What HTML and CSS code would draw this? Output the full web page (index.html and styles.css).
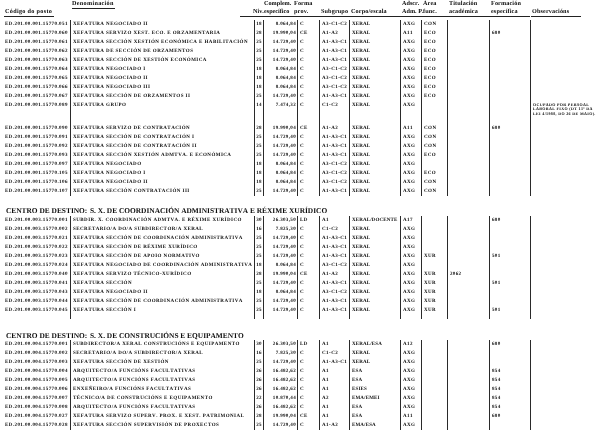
FILE: index.html
```html
<!DOCTYPE html>
<html lang="gl">
<head>
<meta charset="utf-8">
<title>RPT</title>
<link rel="stylesheet" href="styles.css">
</head>
<body>
<div class="page">
  <div class="head">
    <div class="hc c1"><span class="lab ul">Código do posto</span></div>
    <div class="hc c2"><span class="lab ul">Denominación</span><span class="fill"></span><span class="tail"></span></div>
    <div class="hc line niv"><span class="lab">Niv.</span></div>
    <div class="hc line esp"><span class="lab">Complem.<br>específico</span></div>
    <div class="hc line forma"><span class="lab">Forma<br>prov.</span></div>
    <div class="hc line"><span class="lab">Subgrupo</span></div>
    <div class="hc line"><span class="lab">Corpo/escala</span></div>
    <div class="hc line tight"><span class="lab">Adscr.<br>Adm. P.</span></div>
    <div class="hc line"><span class="lab">Área<br>func.</span></div>
    <div class="hc line"><span class="lab">Titulación<br>académica</span></div>
    <div class="hc line"><span class="lab">Formación<br>específica</span></div>
    <div class="hc obsh"><span class="lab ul">Observacións</span></div>
  </div>

  <table class="rpt">
    <colgroup>
      <col class="w1"><col class="w2"><col class="w3"><col class="w4"><col class="w5"><col class="w6">
      <col class="w7"><col class="w8"><col class="w9"><col class="w10"><col class="w11"><col class="w12">
    </colgroup>
    <tbody>
      <tr><td>ED.201.00.001.15770.051</td><td>XEFATURA NEGOCIADO II</td><td class="n">18</td><td class="r">8.064,84</td><td>C</td><td>A3-C1-C2</td><td>XERAL</td><td>AXG</td><td>CON</td><td></td><td></td><td></td></tr>
      <tr><td>ED.201.00.001.15770.060</td><td>XEFATURA SERVIZO XEST. ECO. E ORZAMENTARIA</td><td class="n">28</td><td class="r">19.990,04</td><td>CE</td><td>A1-A2</td><td>XERAL</td><td>A11</td><td>ECO</td><td></td><td>680</td><td></td></tr>
      <tr><td>ED.201.00.001.15770.061</td><td>XEFATURA SECCIÓN XESTIÓN ECONÓMICA E HABILITACIÓN</td><td class="n">25</td><td class="r">14.729,40</td><td>C</td><td>A1-A3-C1</td><td>XERAL</td><td>AXG</td><td>ECO</td><td></td><td></td><td></td></tr>
      <tr><td>ED.201.00.001.15770.062</td><td>XEFATURA DE SECCIÓN DE ORZAMENTOS</td><td class="n">25</td><td class="r">14.729,40</td><td>C</td><td>A1-A3-C1</td><td>XERAL</td><td>AXG</td><td>ECO</td><td></td><td></td><td></td></tr>
      <tr><td>ED.201.00.001.15770.063</td><td>XEFATURA SECCIÓN DE XESTIÓN ECONÓMICA</td><td class="n">25</td><td class="r">14.729,40</td><td>C</td><td>A1-A3-C1</td><td>XERAL</td><td>AXG</td><td>ECO</td><td></td><td></td><td></td></tr>
      <tr><td>ED.201.00.001.15770.064</td><td>XEFATURA NEGOCIADO I</td><td class="n">18</td><td class="r">8.064,84</td><td>C</td><td>A3-C1-C2</td><td>XERAL</td><td>AXG</td><td>ECO</td><td></td><td></td><td></td></tr>
      <tr><td>ED.201.00.001.15770.065</td><td>XEFATURA NEGOCIADO II</td><td class="n">18</td><td class="r">8.064,84</td><td>C</td><td>A3-C1-C2</td><td>XERAL</td><td>AXG</td><td>ECO</td><td></td><td></td><td></td></tr>
      <tr><td>ED.201.00.001.15770.066</td><td>XEFATURA NEGOCIADO III</td><td class="n">18</td><td class="r">8.064,84</td><td>C</td><td>A3-C1-C2</td><td>XERAL</td><td>AXG</td><td>ECO</td><td></td><td></td><td></td></tr>
      <tr><td>ED.201.00.001.15770.067</td><td>XEFATURA SECCIÓN DE ORZAMENTOS II</td><td class="n">25</td><td class="r">14.729,40</td><td>C</td><td>A1-A3-C1</td><td>XERAL</td><td>AXG</td><td>ECO</td><td></td><td></td><td></td></tr>
      <tr class="tall"><td>ED.201.00.001.15770.089</td><td>XEFATURA GRUPO</td><td class="n">14</td><td class="r">7.474,32</td><td>C</td><td>C1-C2</td><td>XERAL</td><td>AXG</td><td></td><td></td><td></td><td class="obs">OCUPADO POR PERSOAL<br>LABORAL FIXO (DT 11ª DA<br>LEI 4/1988, DO 26 DE MAIO).</td></tr>
      <tr><td>ED.201.00.001.15770.090</td><td>XEFATURA SERVIZO DE CONTRATACIÓN</td><td class="n">28</td><td class="r">19.990,04</td><td>CE</td><td>A1-A2</td><td>XERAL</td><td>A11</td><td>CON</td><td></td><td>680</td><td></td></tr>
      <tr><td>ED.201.00.001.15770.091</td><td>XEFATURA SECCIÓN DE CONTRATACIÓN I</td><td class="n">25</td><td class="r">14.729,40</td><td>C</td><td>A1-A3-C1</td><td>XERAL</td><td>AXG</td><td>CON</td><td></td><td></td><td></td></tr>
      <tr><td>ED.201.00.001.15770.092</td><td>XEFATURA SECCIÓN DE CONTRATACIÓN II</td><td class="n">25</td><td class="r">14.729,40</td><td>C</td><td>A1-A3-C1</td><td>XERAL</td><td>AXG</td><td>CON</td><td></td><td></td><td></td></tr>
      <tr><td>ED.201.00.001.15770.093</td><td>XEFATURA SECCIÓN XESTIÓN ADMTVA. E ECONÓMICA</td><td class="n">25</td><td class="r">14.729,40</td><td>C</td><td>A1-A3-C1</td><td>XERAL</td><td>AXG</td><td>ECO</td><td></td><td></td><td></td></tr>
      <tr><td>ED.201.00.001.15770.097</td><td>XEFATURA NEGOCIADO</td><td class="n">18</td><td class="r">8.064,84</td><td>C</td><td>A3-C1-C2</td><td>XERAL</td><td>AXG</td><td></td><td></td><td></td><td></td></tr>
      <tr><td>ED.201.00.001.15770.105</td><td>XEFATURA NEGOCIADO I</td><td class="n">18</td><td class="r">8.064,84</td><td>C</td><td>A3-C1-C2</td><td>XERAL</td><td>AXG</td><td>ECO</td><td></td><td></td><td></td></tr>
      <tr><td>ED.201.00.001.15770.106</td><td>XEFATURA NEGOCIADO II</td><td class="n">18</td><td class="r">8.064,84</td><td>C</td><td>A3-C1-C2</td><td>XERAL</td><td>AXG</td><td>CON</td><td></td><td></td><td></td></tr>
      <tr><td>ED.201.00.001.15770.107</td><td>XEFATURA SECCIÓN CONTRATACIÓN III</td><td class="n">25</td><td class="r">14.729,40</td><td>C</td><td>A1-A3-C1</td><td>XERAL</td><td>AXG</td><td>CON</td><td></td><td></td><td></td></tr>

      <tr class="hd hd1"><td colspan="12"><span class="cd">CENTRO DE DESTINO:</span>S. X. DE COORDINACIÓN ADMINISTRATIVA E RÉXIME XURÍDICO</td></tr>

      <tr><td>ED.201.00.003.15770.001</td><td>SUBDIR. X. COORDINACIÓN ADMTVA. E RÉXIME XURÍDICO</td><td class="n">30</td><td class="r">26.303,50</td><td>LD</td><td>A1</td><td>XERAL/DOCENTE</td><td>A17</td><td></td><td></td><td>680</td><td></td></tr>
      <tr><td>ED.201.00.003.15770.002</td><td>SECRETARIO/A DO/A SUBDIRECTOR/A XERAL</td><td class="n">16</td><td class="r">7.825,30</td><td>C</td><td>C1-C2</td><td>XERAL</td><td>AXG</td><td></td><td></td><td></td><td></td></tr>
      <tr><td>ED.201.00.003.15770.021</td><td>XEFATURA SECCIÓN DE COORDINACIÓN ADMINISTRATIVA</td><td class="n">25</td><td class="r">14.729,40</td><td>C</td><td>A1-A3-C1</td><td>XERAL</td><td>AXG</td><td></td><td></td><td></td><td></td></tr>
      <tr><td>ED.201.00.003.15770.022</td><td>XEFATURA SECCIÓN DE RÉXIME XURÍDICO</td><td class="n">25</td><td class="r">14.729,40</td><td>C</td><td>A1-A3-C1</td><td>XERAL</td><td>AXG</td><td></td><td></td><td></td><td></td></tr>
      <tr><td>ED.201.00.003.15770.023</td><td>XEFATURA SECCIÓN DE APOIO NORMATIVO</td><td class="n">25</td><td class="r">14.729,40</td><td>C</td><td>A1-A3-C1</td><td>XERAL</td><td>AXG</td><td>XUR</td><td></td><td>501</td><td></td></tr>
      <tr><td>ED.201.00.003.15770.024</td><td>XEFATURA NEGOCIADO DE COORDINACIÓN ADMINISTRATIVA</td><td class="n">18</td><td class="r">8.064,84</td><td>C</td><td>A3-C1-C2</td><td>XERAL</td><td>AXG</td><td></td><td></td><td></td><td></td></tr>
      <tr><td>ED.201.00.003.15770.040</td><td>XEFATURA SERVIZO TÉCNICO-XURÍDICO</td><td class="n">28</td><td class="r">19.990,04</td><td>CE</td><td>A1-A2</td><td>XERAL</td><td>AXG</td><td>XUR</td><td>2062</td><td></td><td></td></tr>
      <tr><td>ED.201.00.003.15770.041</td><td>XEFATURA SECCIÓN</td><td class="n">25</td><td class="r">14.729,40</td><td>C</td><td>A1-A3-C1</td><td>XERAL</td><td>AXG</td><td>XUR</td><td></td><td>501</td><td></td></tr>
      <tr><td>ED.201.00.003.15770.043</td><td>XEFATURA NEGOCIADO II</td><td class="n">18</td><td class="r">8.064,84</td><td>C</td><td>A3-C1-C2</td><td>XERAL</td><td>AXG</td><td>XUR</td><td></td><td></td><td></td></tr>
      <tr><td>ED.201.00.003.15770.044</td><td>XEFATURA SECCIÓN DE COORDINACIÓN ADMINISTRATIVA</td><td class="n">25</td><td class="r">14.729,40</td><td>C</td><td>A1-A3-C1</td><td>XERAL</td><td>AXG</td><td>XUR</td><td></td><td></td><td></td></tr>
      <tr><td>ED.201.00.003.15770.045</td><td>XEFATURA SECCIÓN I</td><td class="n">25</td><td class="r">14.729,40</td><td>C</td><td>A1-A3-C1</td><td>XERAL</td><td>AXG</td><td>XUR</td><td></td><td>501</td><td></td></tr>
      <tr class="sp"><td></td><td></td><td></td><td></td><td></td><td></td><td></td><td></td><td></td><td></td><td></td><td></td></tr>

      <tr class="hd hd2"><td colspan="12"><span class="cd">CENTRO DE DESTINO:</span>S. X. DE CONSTRUCIÓNS E EQUIPAMENTO</td></tr>

      <tr><td>ED.201.00.004.15770.001</td><td>SUBDIRECTOR/A XERAL CONSTRUCIÓNS E EQUIPAMENTO</td><td class="n">30</td><td class="r">26.303,50</td><td>LD</td><td>A1</td><td>XERAL/ESA</td><td>A12</td><td></td><td></td><td>680</td><td></td></tr>
      <tr><td>ED.201.00.004.15770.002</td><td>SECRETARIO/A DO/A SUBDIRECTOR/A XERAL</td><td class="n">16</td><td class="r">7.825,30</td><td>C</td><td>C1-C2</td><td>XERAL</td><td>AXG</td><td></td><td></td><td></td><td></td></tr>
      <tr><td>ED.201.00.004.15770.003</td><td>XEFATURA SECCIÓN DE XESTIÓN</td><td class="n">25</td><td class="r">14.729,40</td><td>C</td><td>A1-A3-C1</td><td>XERAL</td><td>AXG</td><td></td><td></td><td></td><td></td></tr>
      <tr><td>ED.201.00.004.15770.004</td><td>ARQUITECTO/A FUNCIÓNS FACULTATIVAS</td><td class="n">26</td><td class="r">16.482,62</td><td>C</td><td>A1</td><td>ESA</td><td>AXG</td><td></td><td></td><td>854</td><td></td></tr>
      <tr><td>ED.201.00.004.15770.005</td><td>ARQUITECTO/A FUNCIÓNS FACULTATIVAS</td><td class="n">26</td><td class="r">16.482,62</td><td>C</td><td>A1</td><td>ESA</td><td>AXG</td><td></td><td></td><td>854</td><td></td></tr>
      <tr><td>ED.201.00.004.15770.006</td><td>ENXEÑEIRO/A FUNCIÓNS FACULTATIVAS</td><td class="n">26</td><td class="r">16.482,62</td><td>C</td><td>A1</td><td>ESIES</td><td>AXG</td><td></td><td></td><td>854</td><td></td></tr>
      <tr><td>ED.201.00.004.15770.007</td><td>TÉCNICO/A DE CONSTRUCIÓNS E EQUIPAMENTO</td><td class="n">22</td><td class="r">10.870,44</td><td>C</td><td>A2</td><td>EMA/EMEI</td><td>AXG</td><td></td><td></td><td>854</td><td></td></tr>
      <tr><td>ED.201.00.004.15770.008</td><td>ARQUITECTO/A FUNCIÓNS FACULTATIVAS</td><td class="n">26</td><td class="r">16.482,62</td><td>C</td><td>A1</td><td>ESA</td><td>AXG</td><td></td><td></td><td>854</td><td></td></tr>
      <tr><td>ED.201.00.004.15770.027</td><td>XEFATURA SERVIZO SUPERV. PROX. E XEST. PATRIMONIAL</td><td class="n">28</td><td class="r">19.990,04</td><td>CE</td><td>A1</td><td>ESA</td><td>A11</td><td></td><td></td><td>680</td><td></td></tr>
      <tr><td>ED.201.00.004.15770.028</td><td>XEFATURA SECCIÓN SUPERVISIÓN DE PROXECTOS</td><td class="n">25</td><td class="r">14.729,40</td><td>C</td><td>A1-A2</td><td>EMA/ESA</td><td>AXG</td><td></td><td></td><td></td><td></td></tr>
    </tbody>
  </table>
</div>
</body>
</html>
```

FILE: styles.css
```css
html, body {
  margin: 0;
  padding: 0;
  background: #ffffff;
}

body {
  font-family: "Liberation Serif", "Times New Roman", serif;
  color: #0d0d0d;
  font-weight: bold;
  text-rendering: geometricPrecision;
  font-kerning: none;
  -webkit-font-smoothing: antialiased;
}

.page {
  width: 615px;
  will-change: transform;
}

/* ---------- column header ---------- */
.head {
  display: grid;
  grid-template-columns: 70px 184px 9px 34px 22px 30px 51px 21px 26px 42px 41px 85px;
  height: 17px;
  font-size: 6.2px;
  line-height: 8.2px;
  letter-spacing: 0.12px;
}

.hc {
  display: flex;
  flex-direction: column;
  justify-content: flex-end;
  box-sizing: border-box;
  height: 17px;
  white-space: nowrap;
}

.hc .lab {
  display: block;
}

.hc .ul {
  border-bottom: 1px solid #222;
  align-self: flex-start;
}

.c1 {
  padding-left: 4px;
  letter-spacing: 0.3px;
}

.c1 .lab {
  padding-left: 1px;
  padding-right: 2px;
}

.c2 {
  flex-direction: row;
  align-items: flex-end;
  padding-left: 2px;
  letter-spacing: 0.3px;
}

.c2 .lab {
  padding-right: 1px;
}

.c2 .fill {
  flex: 1;
}

.c2 .tail {
  width: 14px;
  height: 1px;
  background: #222;
}

.hc.line {
  border-bottom: 1px solid #222;
  padding-left: 2px;
}

.hc.niv {
  padding-left: 0;
  margin-left: -1px;
  letter-spacing: 0;
}

.hc.esp {
  padding-left: 1px;
  letter-spacing: 0;
}

.hc.tight {
  letter-spacing: 0;
}

.hc.forma {
  padding-left: 0;
}

.hc.forma .lab {
  margin-left: -3px;
}

.obsh {
  padding-left: 1px;
}

.obsh .lab {
  width: 49px;
  padding-left: 1px;
}

/* ---------- table ---------- */
.rpt {
  width: 615px;
  table-layout: fixed;
  border-collapse: separate;
  border-spacing: 0;
  margin-top: 3px;
  font-size: 5px;
  line-height: 9px;
  letter-spacing: 0.45px;
}

.w1 { width: 70px; }
.w2 { width: 184px; }
.w3 { width: 9px; }
.w4 { width: 34px; }
.w5 { width: 22px; }
.w6 { width: 30px; }
.w7 { width: 51px; }
.w8 { width: 21px; }
.w9 { width: 26px; }
.w10 { width: 42px; }
.w11 { width: 41px; }
.w12 { width: 85px; }

.rpt td {
  padding: 0 0 0 2px;
  height: 9px;
  vertical-align: top;
  white-space: nowrap;
  overflow: visible;
}

.rpt td:first-child {
  padding-left: 5px;
  letter-spacing: 0.42px;
}

.rpt td + td {
  border-left: 1px solid #2a2a2a;
}

.rpt td.n {
  padding: 0;
  text-align: center;
  letter-spacing: 0.3px;
}

.rpt td.r {
  padding: 0 1px 0 0;
  text-align: right;
  letter-spacing: 0.35px;
}

.rpt td:nth-child(7) {
  letter-spacing: 0.15px;
}

.rpt td:nth-child(10),
.rpt td:nth-child(11) {
  letter-spacing: 0.35px;
}

.rpt tr.tall td {
  height: 21px;
}

.rpt td.obs {
  font-size: 4px;
  line-height: 4.3px;
  padding-top: 2px;
  padding-left: 2px;
  letter-spacing: 0.35px;
}

.rpt tr.sp td {
  height: 4px;
  font-size: 0;
  line-height: 0;
}

/* ---------- centre headings ---------- */
.rpt tr.hd td {
  font-size: 7.4px;
  line-height: 9px;
  vertical-align: bottom;
  padding-left: 6px;
  letter-spacing: 0;
}

.rpt tr.hd1 td {
  height: 19px;
  padding-bottom: 1px;
}

.rpt tr.hd2 td {
  height: 21px;
}

.cd {
  display: inline-block;
  width: 84px;
}
```
